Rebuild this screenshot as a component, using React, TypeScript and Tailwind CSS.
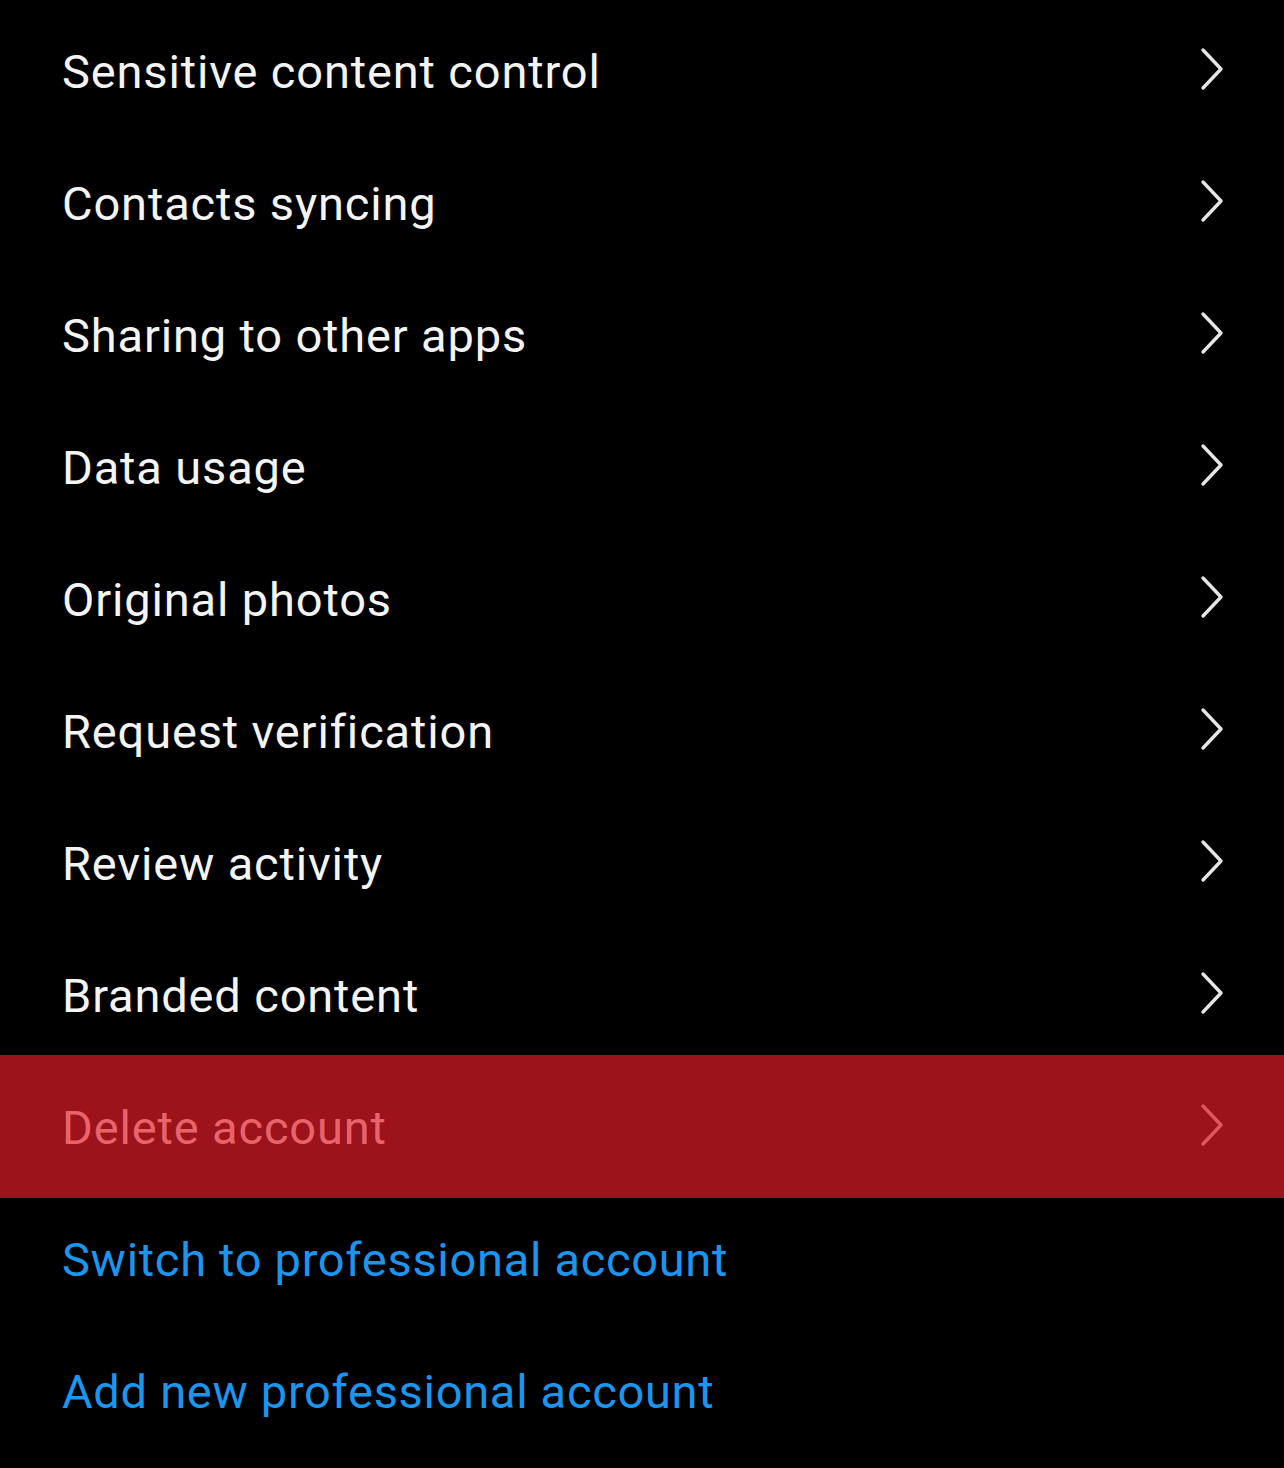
import React from "react";

const Chevron = ({ color }: { color: string }) => (
  <svg width="26" height="44" viewBox="0 0 26 44" fill="none" className="shrink-0 -translate-y-[2px]">
    <path d="M4 3 L22 22 L4 41" stroke={color} strokeWidth="3.4" strokeLinecap="round" strokeLinejoin="round" />
  </svg>
);

const items = [
  "Sensitive content control",
  "Contacts syncing",
  "Sharing to other apps",
  "Data usage",
  "Original photos",
  "Request verification",
  "Review activity",
  "Branded content",
];

export default function App() {
  return (
    <div
      className="w-[1284px] h-[1468px] bg-black overflow-hidden pt-[5px]"
      style={{ fontFamily: "Roboto, 'Noto Sans', sans-serif" }}
    >
      {items.map((t) => (
        <div key={t} className="h-[132px] flex items-center justify-between pl-[62px] pr-[59px]">
          <span className="text-[47px] leading-none text-[#f4f4f4] tracking-[0.85px]">{t}</span>
          <Chevron color="#e6e6e6" />
        </div>
      ))}
      <div className="h-[143px] -mt-[6px] -mb-[5px] bg-[#9c131b] flex items-center justify-between pl-[62px] pr-[59px]">
        <span className="text-[47px] leading-none text-[#e8636a] tracking-[0.85px] translate-y-[1px]">Delete account</span>
        <Chevron color="#e0585f" />
      </div>
      <div className="h-[132px] flex items-center pl-[62px]">
        <span className="text-[47px] leading-none text-[#1b96ee] tracking-[0.7px]">Switch to professional account</span>
      </div>
      <div className="h-[132px] flex items-center pl-[62px]">
        <span className="text-[47px] leading-none text-[#1b96ee] tracking-[0.7px]">Add new professional account</span>
      </div>
    </div>
  );
}
